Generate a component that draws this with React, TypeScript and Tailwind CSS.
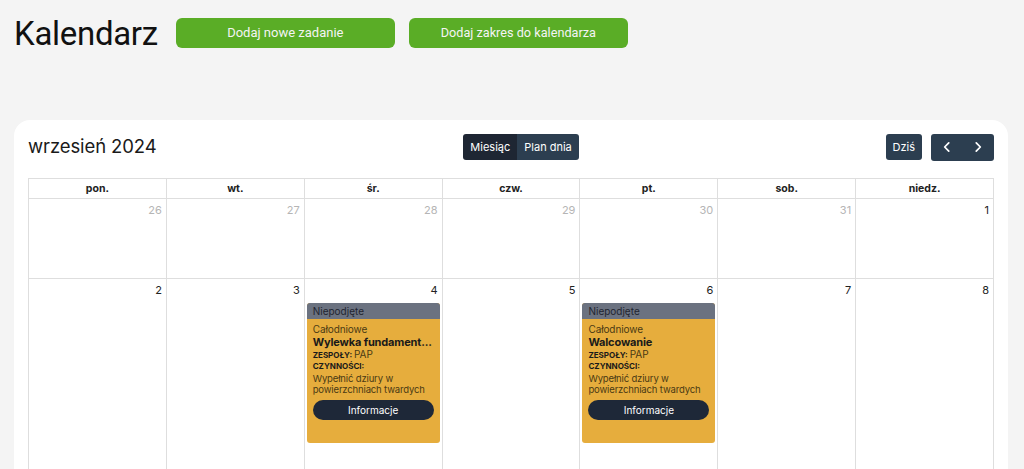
import React from "react";

const days = ["pon.", "wt.", "śr.", "czw.", "pt.", "sob.", "niedz."];

const week1 = [
  { n: 26, muted: true },
  { n: 27, muted: true },
  { n: 28, muted: true },
  { n: 29, muted: true },
  { n: 30, muted: true },
  { n: 31, muted: true },
  { n: 1, muted: false },
];

type Ev = { title: string };

const week2: { n: number; ev?: Ev }[] = [
  { n: 2 },
  { n: 3 },
  { n: 4, ev: { title: "Wylewka fundament..." } },
  { n: 5 },
  { n: 6, ev: { title: "Walcowanie" } },
  { n: 7 },
  { n: 8 },
];

function EventCard({ ev }: { ev: Ev }) {
  return (
    <div className="mx-[2px] mt-[4px] rounded-[3px] overflow-hidden bg-[#e6ad3d] text-[#4a3a14]">
      <div className="h-[16px] bg-[#6b7280] px-[6px] text-[10px] leading-[16px] text-[#1f2530]">Niepodjęte</div>
      <div className="px-[6px] pt-[4px] pb-[23px]">
        <div className="text-[10px] leading-[12px] tracking-[-0.1px]">Całodniowe</div>
        <div className="text-[11px] leading-[14px] font-bold text-[#1a1a1a] tracking-[-0.15px] whitespace-nowrap">{ev.title}</div>
        <div className="text-[8px] leading-[11px] font-bold text-[#1a1a1a]">
          ZESPOŁY: <span className="text-[10px] font-normal text-[#4a3a14]">PAP</span>
        </div>
        <div className="text-[8px] leading-[11px] font-bold text-[#1a1a1a]">CZYNNOŚCI:</div>
        <div className="mt-[1px] text-[9.5px] leading-[11px] tracking-[-0.15px]">Wypełnić dziury w powierzchniach twardych</div>
        <div className="mt-[5px] h-[20px] rounded-full bg-[#1e2838] text-white text-[10px] leading-[20px] text-center">Informacje</div>
      </div>
    </div>
  );
}

export default function App() {
  return (
    <div className="min-h-[469px] bg-[#f4f4f4] pl-[14px] pr-[16px] overflow-hidden" style={{ fontFamily: "Inter, 'Noto Sans', sans-serif" }}>
      <div className="flex items-center h-[64px] pt-[2px]">
        <h1 className="text-[33px] leading-none text-[#111] tracking-[-0.3px] mr-[18px]" style={{ fontFamily: "Roboto, 'Liberation Sans', sans-serif" }}>
          Kalendarz
        </h1>
        <button className="w-[219px] h-[30px] rounded-[6px] bg-[#5aad26] text-[#f4f4f4] text-[13px]" style={{ fontFamily: "Roboto, sans-serif" }}>
          Dodaj nowe zadanie
        </button>
        <button className="ml-[14px] w-[219px] h-[30px] rounded-[6px] bg-[#5aad26] text-[#f4f4f4] text-[12.7px]" style={{ fontFamily: "Roboto, sans-serif" }}>
          Dodaj zakres do kalendarza
        </button>
      </div>

      <div className="mt-[56px] bg-white rounded-t-[16px] px-[14px] pt-[14px] h-[400px]">
        <div className="flex items-center justify-between h-[26px]">
          <div className="text-[18.5px] text-[#1a1a1a] tracking-[-0.1px]">wrzesień 2024</div>
          <div className="flex h-[26px] rounded-[3px] overflow-hidden text-[11px] text-white">
            <div className="px-[7px] leading-[26px] bg-[#1e2633]">Miesiąc</div>
            <div className="px-[7px] leading-[26px] bg-[#2c3e50]">Plan dnia</div>
          </div>
          <div className="flex items-center">
            <div className="h-[26px] px-[7px] leading-[26px] rounded-[3px] bg-[#2c3e50] text-white text-[11px]">Dziś</div>
            <div className="ml-[9px] flex h-[27px] w-[63px] rounded-[3px] bg-[#2c3e50] text-white items-center justify-around">
              <svg width="14" height="14" viewBox="0 0 24 24" fill="none" stroke="currentColor" strokeWidth="3" strokeLinecap="round" strokeLinejoin="round"><path d="M15 5l-7 7 7 7" /></svg>
              <svg width="14" height="14" viewBox="0 0 24 24" fill="none" stroke="currentColor" strokeWidth="3" strokeLinecap="round" strokeLinejoin="round"><path d="M9 5l7 7-7 7" /></svg>
            </div>
          </div>
        </div>

        <div className="mt-[18px] border-l border-t border-[#dedede]">
          <div className="grid grid-cols-7">
            {days.map((d) => (
              <div key={d} className="h-[20px] border-r border-b border-[#dedede] text-center text-[10.5px] leading-[20px] font-bold text-[#222]">
                {d}
              </div>
            ))}
          </div>
          <div className="grid grid-cols-7">
            {week1.map((c) => (
              <div key={c.n} className="h-[80px] border-r border-b border-[#dedede] text-right pr-[4px] pt-[3px] text-[11px] leading-[17px]">
                <span className={c.muted ? "text-[#b5b5b5]" : "text-[#222]"}>{c.n}</span>
              </div>
            ))}
          </div>
          <div className="grid grid-cols-7">
            {week2.map((c) => (
              <div key={c.n} className="h-[200px] border-r border-b border-[#dedede] pt-[3px]">
                <div className="text-right pr-[4px] text-[11px] leading-[17px] text-[#222]">{c.n}</div>
                {c.ev && <EventCard ev={c.ev} />}
              </div>
            ))}
          </div>
        </div>
      </div>
    </div>
  );
}
